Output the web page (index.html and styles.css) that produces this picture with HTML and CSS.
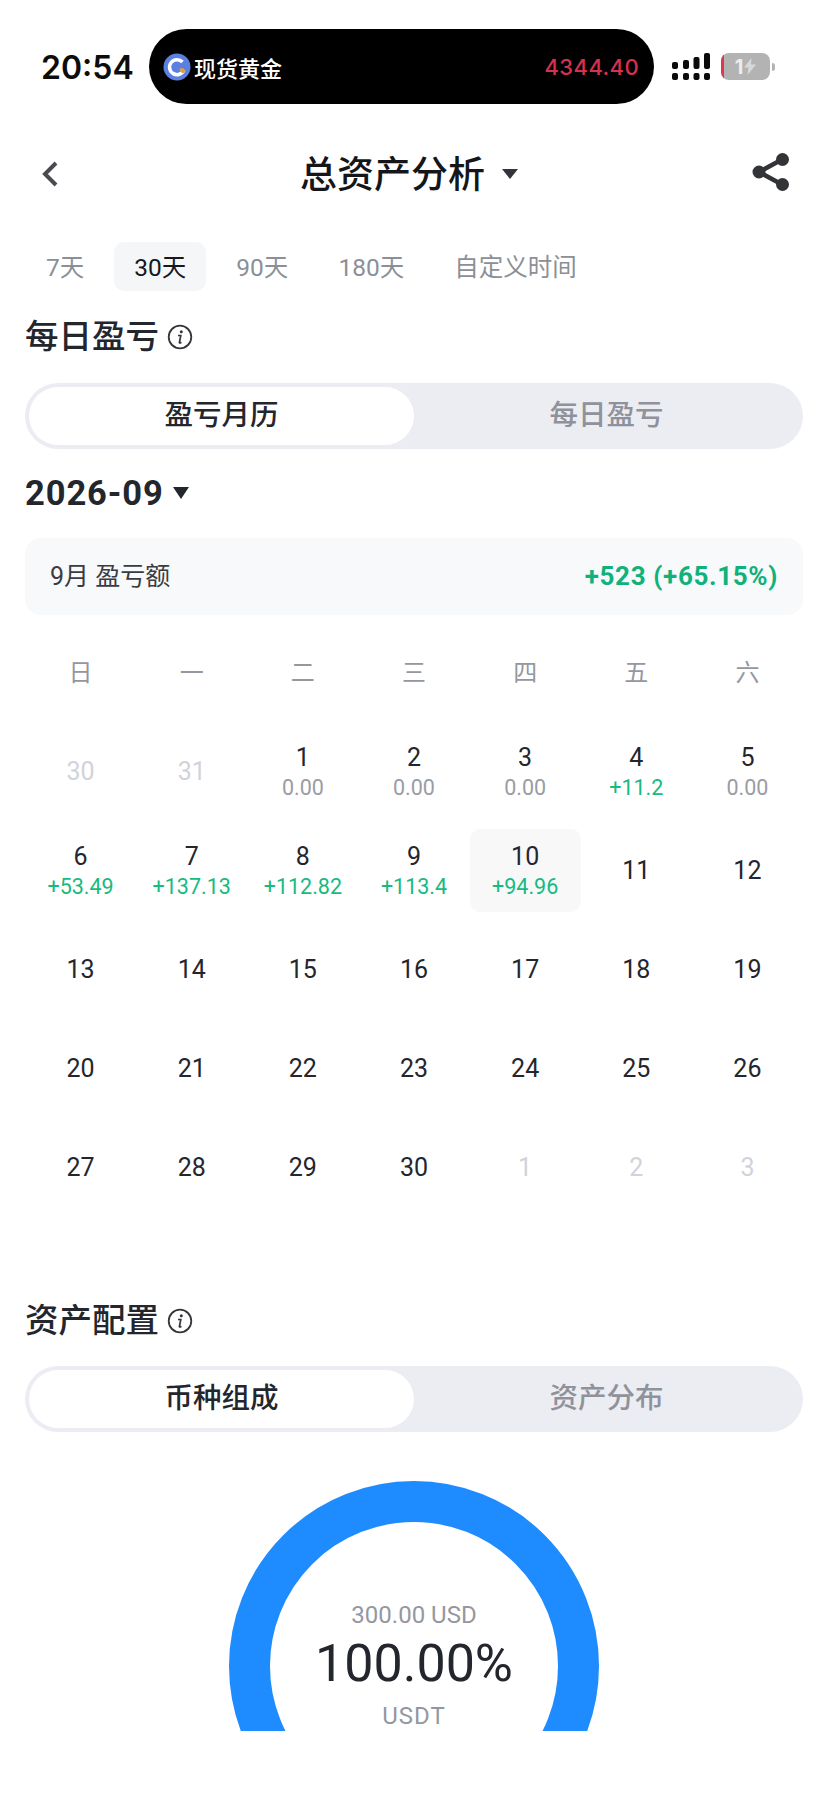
FILE: index.html
```html
<!DOCTYPE html>
<html lang="zh-CN">
<head>
	<meta charset="UTF-8">
	<title>总资产分析</title>
	<link rel="stylesheet" href="styles.css">
</head>
<body>

	<div class="status">
		<span class="time">20:54</span>
		<div class="island">
			<svg class="logo" width="28" height="28" viewBox="0 0 28 28">
				<circle cx="14" cy="14" r="13.500" fill="#5b80e2"/>
				<path d="M19.500 9a7.500 7.500 0 1 0 1.500 8" fill="none" stroke="#fff" stroke-width="3.500"/>
				<path d="M16.500 15.500l3.500-.5 2.500 3-2.500 2.500-3-2z" fill="#d9a24a"/>
			</svg>
			<span class="island-name">现货黄金</span>
			<span class="island-price">4344.40</span>
		</div>
		<svg class="signal" width="38" height="27" viewBox="0 0 38 27">
			<rect x="0" y="9" width="6" height="7" rx="2"/>
			<rect x="0" y="20" width="6" height="7" rx="2"/>
			<rect x="11" y="7" width="6" height="9" rx="2"/>
			<rect x="11" y="20" width="6" height="7" rx="2"/>
			<rect x="21.500" y="4" width="6" height="12" rx="2"/>
			<rect x="21.500" y="20" width="6" height="7" rx="2"/>
			<rect x="32" y="0" width="6" height="16" rx="2"/>
			<rect x="32" y="20" width="6" height="7" rx="2"/>
		</svg>
		<div class="battery">
			<div class="battery-body">
				<span class="battery-low"></span>
				<span class="battery-num">1</span>
				<svg width="12" height="17" viewBox="0 0 12 17"><path d="M7.500 0L0 9.500h4.500L3.500 17 12 6.500H7z" fill="#d8d8d8"/></svg>
			</div>
			<span class="battery-tip"></span>
		</div>
	</div>

	<div class="nav">
		<svg class="back" width="18" height="28" viewBox="0 0 18 28"><path d="M15 3L4 14l11 11" fill="none" stroke="#4a4b50" stroke-width="4"/></svg>
		<div class="nav-title">
			<span>总资产分析</span>
			<i class="tri tri-title"></i>
		</div>
		<svg class="share" width="38" height="40" viewBox="0 0 38 40">
			<path d="M30 7.500L7 20l23 12.500" fill="none" stroke="#333438" stroke-width="4.500"/>
			<circle cx="30.500" cy="7.500" r="6.500" fill="#333438"/>
			<circle cx="7" cy="20" r="6.500" fill="#333438"/>
			<circle cx="30.500" cy="32.500" r="6.500" fill="#333438"/>
		</svg>
	</div>

	<ul class="range">
		<li>7天</li>
		<li class="current">30天</li>
		<li>90天</li>
		<li>180天</li>
		<li>自定义时间</li>
	</ul>

	<h2 class="title">每日盈亏
		<svg class="info" width="26" height="26" viewBox="0 0 26 26">
			<circle cx="13" cy="13" r="11.300" fill="none" stroke="#33353b" stroke-width="1.800"/>
			<circle cx="14.300" cy="7.700" r="1.500" fill="#33353b"/>
			<path d="M11 11.500h2.800l-1.400 6.800q-.2 1.300 2-.1" fill="none" stroke="#33353b" stroke-width="1.700"/>
		</svg>
	</h2>

	<div class="seg">
		<span class="current">盈亏月历</span>
		<span>每日盈亏</span>
	</div>

	<div class="month">2026-09 <i class="tri tri-month"></i></div>

	<div class="sum">
		<span class="sum-name">9月 盈亏额</span>
		<span class="sum-val">+523 (+65.15%)</span>
	</div>

	<div class="week">
		<span>日</span><span>一</span><span>二</span><span>三</span><span>四</span><span>五</span><span>六</span>
	</div>

	<div class="days">
		<div class="day off"><b>30</b></div>
		<div class="day off"><b>31</b></div>
		<div class="day"><b>1</b><em>0.00</em></div>
		<div class="day"><b>2</b><em>0.00</em></div>
		<div class="day"><b>3</b><em>0.00</em></div>
		<div class="day"><b>4</b><em class="up">+11.2</em></div>
		<div class="day"><b>5</b><em>0.00</em></div>

		<div class="day"><b>6</b><em class="up">+53.49</em></div>
		<div class="day"><b>7</b><em class="up">+137.13</em></div>
		<div class="day"><b>8</b><em class="up">+112.82</em></div>
		<div class="day"><b>9</b><em class="up">+113.4</em></div>
		<div class="day today"><b>10</b><em class="up">+94.96</em></div>
		<div class="day"><b>11</b></div>
		<div class="day"><b>12</b></div>

		<div class="day"><b>13</b></div>
		<div class="day"><b>14</b></div>
		<div class="day"><b>15</b></div>
		<div class="day"><b>16</b></div>
		<div class="day"><b>17</b></div>
		<div class="day"><b>18</b></div>
		<div class="day"><b>19</b></div>

		<div class="day"><b>20</b></div>
		<div class="day"><b>21</b></div>
		<div class="day"><b>22</b></div>
		<div class="day"><b>23</b></div>
		<div class="day"><b>24</b></div>
		<div class="day"><b>25</b></div>
		<div class="day"><b>26</b></div>

		<div class="day"><b>27</b></div>
		<div class="day"><b>28</b></div>
		<div class="day"><b>29</b></div>
		<div class="day"><b>30</b></div>
		<div class="day off"><b>1</b></div>
		<div class="day off"><b>2</b></div>
		<div class="day off"><b>3</b></div>
	</div>

	<h2 class="title title-asset">资产配置
		<svg class="info" width="26" height="26" viewBox="0 0 26 26">
			<circle cx="13" cy="13" r="11.300" fill="none" stroke="#33353b" stroke-width="1.800"/>
			<circle cx="14.300" cy="7.700" r="1.500" fill="#33353b"/>
			<path d="M11 11.500h2.800l-1.400 6.800q-.2 1.300 2-.1" fill="none" stroke="#33353b" stroke-width="1.700"/>
		</svg>
	</h2>

	<div class="seg">
		<span class="current">币种组成</span>
		<span>资产分布</span>
	</div>

	<div class="gauge">
		<svg width="370" height="250" viewBox="0 0 370 250">
			<circle cx="185" cy="185" r="164.500" fill="none" stroke="#1e8cff" stroke-width="41"/>
		</svg>
		<div class="gauge-text">
			<span class="gauge-usd">300.00 USD</span>
			<span class="gauge-pct">100.00%</span>
			<span class="gauge-coin">USDT</span>
		</div>
	</div>

</body>
</html>
```

FILE: styles.css
```css
*{
	margin: 0;
	padding: 0;
	box-sizing: border-box;
}

body{
	width: 828px;
	height: 1801px;
	overflow: hidden;
	background: #fff;
	color: #24262d;
	font-family: Roboto, "Noto Sans CJK SC", sans-serif;
}

ul{
	list-style: none;
}

i, em{
	font-style: normal;
}

/* 状态栏 */
.status{
	height: 104px;
	padding: 29px 0 0 41px;
	display: flex;
	align-items: center;
}

.time{
	width: 108px;
	margin-top: 2px;
	font: 600 32px Inter, sans-serif;
	color: #0c0c0c;
}

.island{
	width: 505px;
	height: 75px;
	margin-right: 18px;
	padding: 0 15px 0 14px;
	border-radius: 38px;
	background: #000;
	display: flex;
	align-items: center;
}

.logo{
	flex: none;
}

.island-name{
	margin-left: 3px;
	font-size: 22px;
	font-weight: 500;
	color: #fff;
}

.island-price{
	margin-left: auto;
	font: 500 22px Inter, sans-serif;
	letter-spacing: .4px;
	color: #d8304f;
}

.signal{
	flex: none;
	fill: #0a0a0a;
	margin-right: 11px;
}

.battery{
	display: flex;
	align-items: center;
}

.battery-body{
	width: 49px;
	height: 27px;
	border-radius: 8px;
	background: #b3b3b3;
	display: flex;
	align-items: center;
	justify-content: center;
	gap: 1px;
	overflow: hidden;
	position: relative;
}

.battery-low{
	position: absolute;
	left: 0;
	top: 0;
	bottom: 0;
	width: 3px;
	background: #dc3a4c;
}

.battery-num{
	font: 700 20px Inter, sans-serif;
	color: #eee;
}

.battery-tip{
	width: 3px;
	height: 8px;
	margin-left: 2px;
	border-radius: 0 3px 3px 0;
	background: #b3b3b3;
}

/* 标题 */
.nav{
	height: 136px;
	padding: 0 38px 0 41px;
	display: flex;
	align-items: center;
	justify-content: space-between;
}

.back{
	margin-top: 3px;
}

.nav-title{
	display: flex;
	align-items: center;
	font-size: 37px;
	font-weight: 500;
	color: #15161a;
	margin-left: 7px;
}

.tri{
	display: block;
	width: 0;
	height: 0;
	border-style: solid;
	border-color: #33343a transparent transparent;
}

.tri-title{
	margin: 4px 0 0 17px;
	border-width: 10px 8px 0;
}

/* 时间范围 */
.range{
	height: 49px;
	margin-top: 2px;
	padding-left: 26px;
	display: flex;
	gap: 10px;
	font-size: 24.500px;
	color: #8c8f96;
}

.range li{
	height: 49px;
	line-height: 51px;
	padding: 0 20px;
}

.range li.current{
	color: #17181c;
	background: #f5f6f8;
	border-radius: 10px;
}

/* 小标题 */
.title{
	height: 46px;
	margin: 23px 0 0 25px;
	display: flex;
	align-items: center;
	gap: 8px;
	font-size: 33.500px;
	line-height: 46px;
	font-weight: 500;
}

/* 切换 */
.seg{
	width: 778px;
	height: 66px;
	margin: 23px 0 0 25px;
	padding: 4px;
	border-radius: 33px;
	background: #ebedf3;
	display: flex;
	font-size: 28.500px;
	font-weight: 500;
	color: #8f929b;
}

.seg span{
	flex: 1;
	line-height: 58px;
	text-align: center;
	border-radius: 29px;
}

.seg span.current{
	background: #fff;
	color: #24262d;
}

/* 月份 */
.month{
	height: 46px;
	margin: 21px 0 0 25px;
	display: flex;
	align-items: center;
	font-size: 34.500px;
	font-weight: 700;
	line-height: 46px;
	letter-spacing: .9px;
}

.tri-month{
	margin-left: 9px;
	border-width: 12px 8px 0;
	border-top-color: #24262d;
}

.sum{
	width: 778px;
	height: 77px;
	margin: 22px 0 0 25px;
	padding: 0 25px;
	border-radius: 16px;
	background: #f8f9fb;
	display: flex;
	align-items: center;
	justify-content: space-between;
}

.sum-name{
	margin-bottom: 6px;
	font-size: 25px;
	color: #3a3c44;
}

.sum-val{
	margin-bottom: 2px;
	font-size: 26px;
	font-weight: 700;
	letter-spacing: .65px;
	color: #10b27b;
}

/* 日历 */
.week{
	width: 778px;
	margin: 40px 0 0 25px;
	display: grid;
	grid-template-columns: repeat(7, 1fr);
	text-align: center;
	font-size: 24px;
	line-height: 36px;
	color: #94979f;
}

.days{
	width: 778px;
	margin: 39px 0 0 25px;
	display: grid;
	grid-template-columns: repeat(7, 1fr);
	grid-auto-rows: 83px;
	row-gap: 16px;
}

.day{
	display: flex;
	flex-direction: column;
	align-items: center;
	justify-content: center;
	border-radius: 10px;
}

.day b{
	font-size: 25px;
	font-weight: 400;
	line-height: 32px;
}

.day em{
	font-size: 21.500px;
	line-height: 28px;
	color: #9a9ca3;
}

.day em.up{
	color: #17ba80;
}

.day.off b{
	color: #d1d3d9;
}

.day.today{
	background: #f8f8f9;
}

.title-asset{
	height: 44px;
	margin-top: 90px;
}

/* 环形图 */
.gauge{
	width: 370px;
	height: 250px;
	margin: 49px auto 0;
	display: grid;
	overflow: hidden;
}

.gauge svg, .gauge-text{
	grid-area: 1 / 1;
}

.gauge-text{
	padding-top: 118px;
	display: flex;
	flex-direction: column;
	align-items: center;
}

.gauge-usd{
	font-size: 24px;
	line-height: 32px;
	color: #94979f;
}

.gauge-pct{
	font-size: 52px;
	line-height: 66px;
}

.gauge-coin{
	margin-top: 3px;
	font-size: 24px;
	line-height: 32px;
	letter-spacing: 1px;
	color: #94979f;
}
```
